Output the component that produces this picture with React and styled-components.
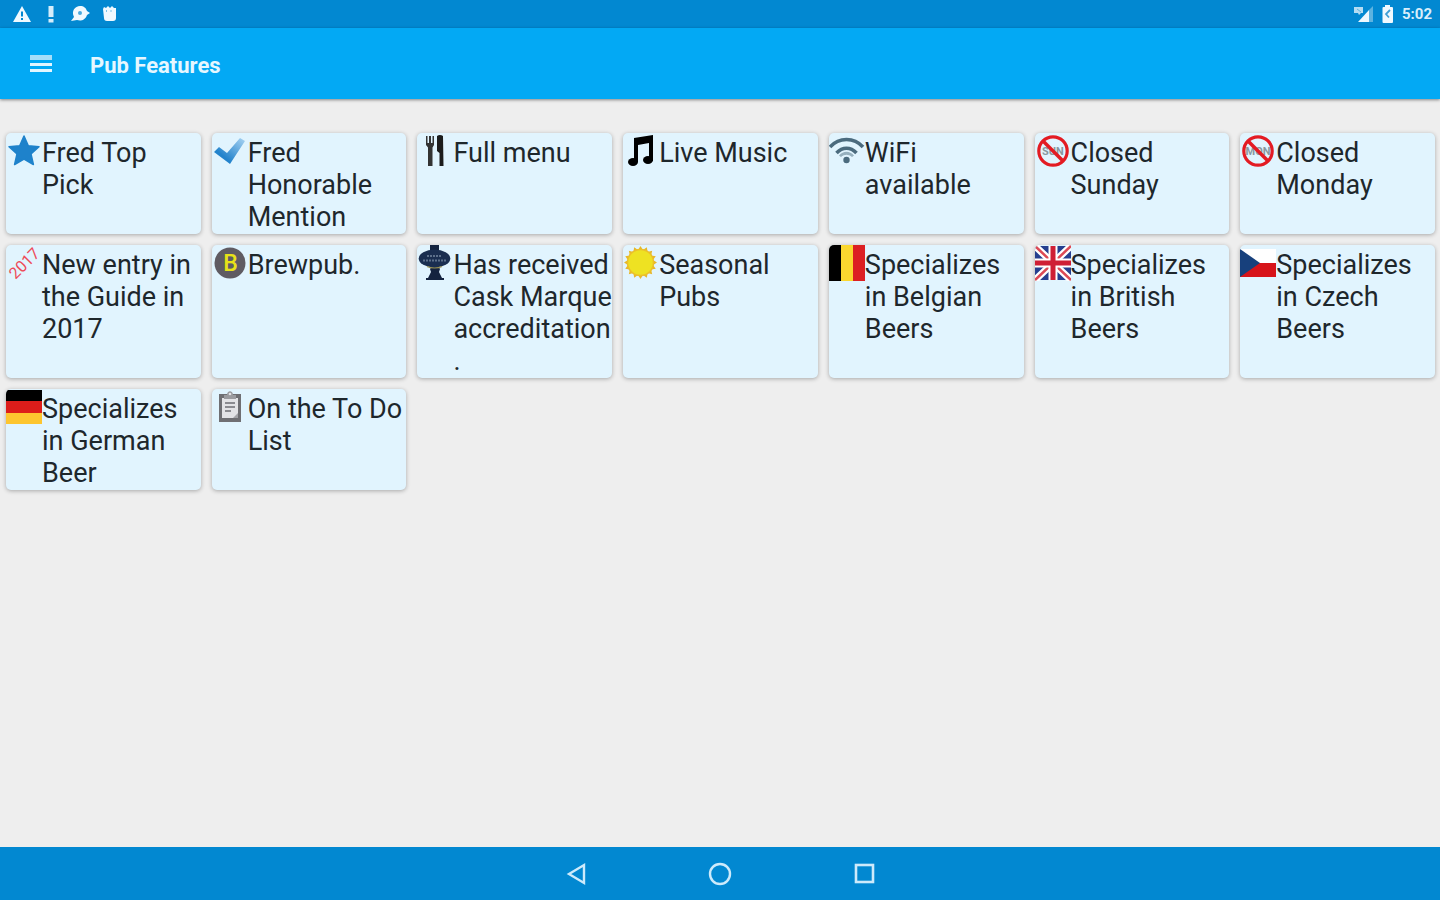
import React from 'react'
import styled, { createGlobalStyle } from 'styled-components'

const GlobalStyle = createGlobalStyle`
    * {
        box-sizing: border-box;
    }

    body {
        margin: 0;
        background: #eee;
        font-family: Roboto, "Liberation Sans", sans-serif;
    }
`

const Page = styled.div`
    display: flex;
    flex-direction: column;
    min-height: 100vh;
`

const StatusBar = styled.div`
    display: flex;
    align-items: center;
    justify-content: space-between;
    height: 28px;
    padding: 0 8px 0 12px;
    background: #0288d1;
`

const StatusGroup = styled.div`
    display: flex;
    align-items: center;
    gap: 8px;
`

const Clock = styled.time`
    color: #d9eefb;
    font-size: 15px;
    font-weight: 700;
    line-height: 28px;
`

const AppBar = styled.header`
    display: flex;
    align-items: center;
    gap: 28px;
    height: 71px;
    padding: 0 20px;
    background: #03a9f4;
    box-shadow: 0 1px 3px rgba(0, 0, 0, 0.45);
`

const IconButton = styled.button`
    display: flex;
    align-items: center;
    justify-content: center;
    width: ${props => props.$width};
    height: 42px;
    padding: 0;
    border: 0;
    background: none;
    cursor: pointer;
`

const Title = styled.h1`
    margin: 0;
    padding-top: 4px;
    color: #e6f7ff;
    font-size: 22px;
    font-weight: 700;
    line-height: 28px;
`

const Main = styled.main`
    flex: 1;
    padding: 34px 5px 34px 6px;
`

const Features = styled.ul`
    display: grid;
    grid-template-columns: repeat(7, minmax(0, 1fr));
    gap: 11px;
    margin: 0;
    padding: 0;
    list-style: none;
`

const Card = styled.li`
    display: grid;
    grid-template-columns: 36px minmax(0, 1fr);
    align-items: start;
    overflow: hidden;
    border-radius: 5px;
    background: #e1f4fe;
    box-shadow: 0 1px 4px rgba(0, 0, 0, 0.3);
`

const Label = styled.span`
    padding: 4px 0 1px;
    color: #1e272c;
    font-size: 27px;
    line-height: 32px;
    overflow-wrap: anywhere;
`

const NavBar = styled.nav`
    display: flex;
    align-items: center;
    justify-content: center;
    height: 53px;
    background: #0288d1;
`

const Picture = styled.svg`
    display: block;
    width: 36px;
    height: 36px;
`

const Drawing = ({children}) => (
    <Picture viewBox="0 0 36 36" aria-hidden="true">{children}</Picture>
)

const Star = () => (
    <Drawing>
        <path
            d="M18 3l4.300 9.700 10.700 1-8 7.200 2.400 10.600L18 26l-9.400 5.500L11 20.900l-8-7.200 10.700-1z"
            fill="#1e82cb" stroke="#1e82cb" strokeWidth="1.500" strokeLinejoin="round"
        />
    </Drawing>
)

const Check = () => (
    <Drawing>
        <defs>
            <linearGradient id="check" x1="0" y1="1" x2="1" y2="0">
                <stop offset="0.3" stopColor="#2383cc" />
                <stop offset="1" stopColor="#a9d4f3" />
            </linearGradient>
        </defs>
        <path d="M2 19l5-5 8 6L28 5l5 3-15 23z" fill="url(#check)" />
    </Drawing>
)

const Cutlery = () => (
    <Drawing>
        <path d="M9 3h1.500v7h1.500V3h2v7h1.500V3H17v9l-1.500 2.500V33H11V14.500L9 12z" fill="#333" />
        <path d="M20 3c2-1.500 4.500-1 6 0l.500 30H22.500V20L20 18z" fill="#1c1c1c" />
    </Drawing>
)

const Music = () => (
    <Drawing>
        <path d="M11 5l19-3v26h-4V10l-11 2v17h-4z" fill="#000" />
        <ellipse cx="10" cy="29" rx="5" ry="4" fill="#000" />
        <ellipse cx="25" cy="27" rx="5" ry="4" fill="#000" />
    </Drawing>
)

const Wifi = () => (
    <Drawing>
        <g fill="none" stroke="#4b6b7e" strokeWidth="3.500">
            <path d="M1 14c9-10 24-10 33 0" />
            <path d="M7.500 20c6-6.500 14-6.500 20 0" />
        </g>
        <path d="M10 22.500c4.500-5 10.500-5 15 0l-2 1.500c-3.500-3-7.500-3-11 0z" fill="#4b6b7e" opacity="0.500" />
        <circle cx="17.500" cy="27" r="3.200" fill="#4b6b7e" />
    </Drawing>
)

const Closed = ({day}) => (
    <Drawing>
        <text
            x="18" y="22" fill="#8a979e" fontSize="11" fontWeight="700" textAnchor="middle"
        >
            {day}
        </text>
        <circle cx="18" cy="18" r="14.200" fill="none" stroke="#e31b23" strokeWidth="3.200" />
        <path d="M8 8l20 20" stroke="#e31b23" strokeWidth="3.500" />
    </Drawing>
)

const NewEntry = () => (
    <Drawing>
        <text
            x="18" y="24" fill="#ee4a58" fontSize="16" textAnchor="middle"
            transform="rotate(-45 18 18)"
        >
            2017
        </text>
    </Drawing>
)

const Brewpub = () => (
    <Drawing>
        <circle cx="18" cy="18" r="15.500" fill="#5f5b62" />
        <text x="18.500" y="26" fill="#e8e217" fontSize="23" fontWeight="500" textAnchor="middle">B</text>
    </Drawing>
)

const CaskMarque = () => (
    <Drawing>
        <path d="M13 0h9v5h-1v16l2 3-1 3 3 6h2v2H9v-2h2l3-6-1-3 2-3V5h-2z" fill="#14233f" />
        <ellipse cx="17.500" cy="13.500" rx="15.800" ry="9" fill="#1a2e50" />
        <path d="M10 11h15M6 15.500h23" stroke="#5d708b" strokeWidth="2" strokeDasharray="2 1" />
        <path d="M10 21.500c4 2 11 2 15 0" fill="none" stroke="#9a9355" strokeWidth="1.200" />
    </Drawing>
)

const rays = Array.from({length: 16}, (_, i) => i * 22.5)

const Sun = () => (
    <Drawing>
        {rays.map(angle => (
            <path key={angle} d="M15 5l2.500-4L20 5z" fill="#e7b72b" transform={`rotate(${angle} 17.500 17.500)`} />
        ))}
        <circle cx="17.500" cy="17.500" r="13" fill="#eee222" stroke="#ecc02a" strokeWidth="1.500" />
    </Drawing>
)

const Belgium = () => (
    <Drawing>
        <path d="M0 0h12v36H0z" fill="#000" />
        <path d="M12 0h12v36H12z" fill="#fbd72f" />
        <path d="M24 0h12v36H24z" fill="#dc1f22" />
    </Drawing>
)

const Britain = () => (
    <Drawing>
        <path d="M0 1h36v34H0z" fill="#263f8f" />
        <path d="M0 1l36 34M36 1L0 35" stroke="#fff" strokeWidth="7" />
        <path d="M0 1l36 34M36 1L0 35" stroke="#dc4a55" strokeWidth="2.500" />
        <path d="M18 1v34M0 18h36" stroke="#fff" strokeWidth="9" />
        <path d="M18 1v34M0 18h36" stroke="#cf1f35" strokeWidth="5" />
    </Drawing>
)

const Czechia = () => (
    <Drawing>
        <path d="M0 4h36v14H0z" fill="#fff" />
        <path d="M0 18h36v14H0z" fill="#d7141a" />
        <path d="M0 4l20 14L0 32z" fill="#17407c" />
    </Drawing>
)

const Germany = () => (
    <Drawing>
        <path d="M0 1h36v11H0z" fill="#000" />
        <path d="M0 12h36v12H0z" fill="#dd1d1a" />
        <path d="M0 24h36v11H0z" fill="#fdc52f" />
    </Drawing>
)

const Clipboard = () => (
    <Drawing>
        <path d="M7 5h22v28H7z" fill="#6f6f73" />
        <path d="M10 9h16v20H10z" fill="#e3e3e6" />
        <path d="M12 10V6h3c0-5 6-5 6 0h3v4z" fill="#9b9b9f" />
        <circle cx="18" cy="5" r="1.300" fill="#e3e3e6" />
        <path d="M13 14h10M13 18h10M13 22h6" stroke="#8b8b90" strokeWidth="1.800" />
        <path d="M21 29l5-5v5z" fill="#a4a4a8" />
    </Drawing>
)

const features = [
    {label: 'Fred Top Pick', icon: <Star />},
    {label: 'Fred Honorable Mention', icon: <Check />},
    {label: 'Full menu', icon: <Cutlery />},
    {label: 'Live Music', icon: <Music />},
    {label: 'WiFi available', icon: <Wifi />},
    {label: 'Closed Sunday', icon: <Closed day="SUN" />},
    {label: 'Closed Monday', icon: <Closed day="MON" />},
    {label: 'New entry in the Guide in 2017', icon: <NewEntry />},
    {label: 'Brewpub.', icon: <Brewpub />},
    {label: 'Has received Cask Marque accreditation.', icon: <CaskMarque />},
    {label: 'Seasonal Pubs', icon: <Sun />},
    {label: 'Specializes in Belgian Beers', icon: <Belgium />},
    {label: 'Specializes in British Beers', icon: <Britain />},
    {label: 'Specializes in Czech Beers', icon: <Czechia />},
    {label: 'Specializes in German Beer', icon: <Germany />},
    {label: 'On the To Do List', icon: <Clipboard />},
]

const Notifications = () => (
    <svg width="106" height="28" viewBox="12 0 106 28" aria-hidden="true">
        <path d="M22 6l9 16H13z" fill="#f0f9ff" />
        <path d="M22 11.500v5M22 18v2" stroke="#0288d1" strokeWidth="2" />
        <path d="M48.500 6h5v11h-5zM48.500 19h5v3.500h-5z" fill="#d5edfb" />
        <path d="M71 21l3-4c-3-6 1-11 6-11 4 0 6 2 7 5l3 2-3 2c-2 6-7 6-10 5z" fill="#f0f9ff" />
        <circle cx="80" cy="13" r="2" fill="#4aa9de" />
        <path d="M103 9l1-2 2 1 2-2 2 2 2-2 2 2 2 0v10q0 3-3 3h-6q-3 0-3-3z" fill="#f0f9ff" />
        <path d="M106.500 10v2M111 10v2" stroke="#7cc2e8" />
    </svg>
)

const Signal = () => (
    <svg width="20" height="28" viewBox="0 0 20 28" aria-hidden="true">
        <path d="M19 6v16h-4V10z" fill="#5db3e0" />
        <path d="M15 10v12H4z" fill="#eef8ff" />
        <path d="M0 7h9v6H7l-2 2-1-2H0z" fill="#b5dcf2" />
        <path d="M3 9l4 3" stroke="#5db3e0" />
    </svg>
)

const Battery = () => (
    <svg width="12" height="28" viewBox="0 0 12 28" aria-hidden="true">
        <path d="M3 7V5h5v2h2q1 0 1 1v14q0 1-1 1H1.500q-1 0-1-1V8q0-1 1-1z" fill="#f0f9ff" />
        <path d="M8 10l-4 4 3 3.500" fill="none" stroke="#3f9fd6" strokeWidth="1.800" />
    </svg>
)

const App = () => {
    return (
        <Page>
            <GlobalStyle />
            <StatusBar>
                <Notifications />
                <StatusGroup>
                    <Signal />
                    <Battery />
                    <Clock>5:02</Clock>
                </StatusGroup>
            </StatusBar>
            <AppBar>
                <IconButton type="button" aria-label="Open menu" $width="42px">
                    <svg width="22" height="18" viewBox="0 0 22 18" aria-hidden="true">
                        <path d="M0 0h22v5H0z" fill="#a5def9" />
                        <path d="M0 8h22v3H0zM0 14h22v3H0z" fill="#e3f6ff" />
                    </svg>
                </IconButton>
                <Title>Pub Features</Title>
            </AppBar>
            <Main>
                <Features>
                    { features.map(feature => (
                        <Card key={feature.label}>
                            {feature.icon}
                            <Label>{feature.label}</Label>
                        </Card>
                    ))}
                </Features>
            </Main>
            <NavBar>
                <IconButton type="button" aria-label="Back" $width="144px">
                    <svg width="24" height="24" viewBox="0 0 24 24" aria-hidden="true">
                        <path d="M20 3v18L5 12z" fill="none" stroke="#cdeafb" strokeWidth="2.400" />
                    </svg>
                </IconButton>
                <IconButton type="button" aria-label="Home" $width="144px">
                    <svg width="24" height="24" viewBox="0 0 24 24" aria-hidden="true">
                        <circle cx="12" cy="12" r="10" fill="none" stroke="#cdeafb" strokeWidth="2.400" />
                    </svg>
                </IconButton>
                <IconButton type="button" aria-label="Recent apps" $width="144px">
                    <svg width="24" height="24" viewBox="0 0 24 24" aria-hidden="true">
                        <rect x="4" y="3" width="17" height="17" fill="none" stroke="#cdeafb" strokeWidth="2.600" />
                    </svg>
                </IconButton>
            </NavBar>
        </Page>
    )
}

export default App
